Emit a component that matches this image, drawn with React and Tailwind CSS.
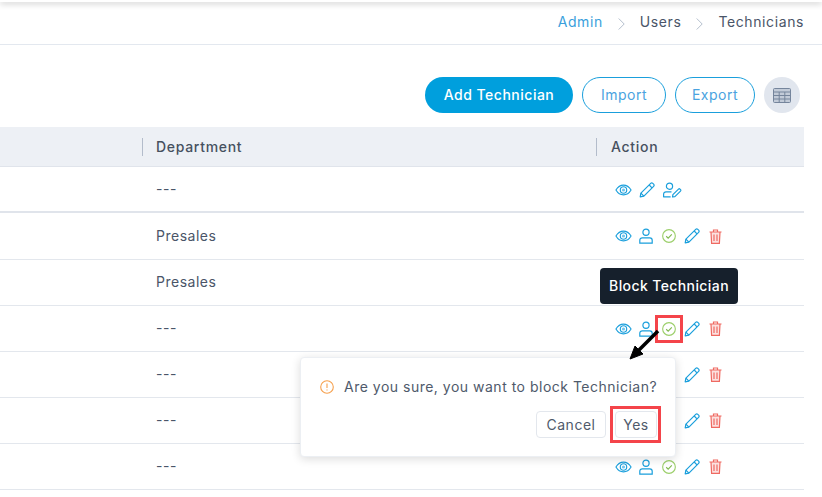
import React from "react";

const font = { fontFamily: "Inter, 'Open Sans', sans-serif" };

const Eye = () => (
  <svg width="17" height="14" viewBox="0 0 18 14" fill="none" stroke="#1a9fdc" strokeWidth="1.2">
    <path d="M1 7c2-3.4 4.8-5.2 8-5.2S15 3.600 17 7c-2 3.400-4.800 5.200-8 5.200S3 10.400 1 7z" />
    <circle cx="9" cy="7" r="3.400" />
    <circle cx="9" cy="7" r="1.700" fill="#1a9fdc" fillOpacity="0.6" stroke="none" />
  </svg>
);

const Pencil = () => (
  <svg width="16" height="16" viewBox="0 0 16 16" fill="none" stroke="#1a9fdc" strokeWidth="1.2" strokeLinejoin="round">
    <path d="M1.200 14.800l.7-3.700L11.700 1.400a1.500 1.500 0 0 1 2.100 0l.8.8a1.500 1.500 0 0 1 0 2.100L4.900 14.100z" />
    <path d="M10.200 3l2.800 2.800M1.900 11.100l3 3" />
  </svg>
);

const User = () => (
  <svg width="14" height="16" viewBox="0 0 14 16" fill="none" stroke="#1a9fdc" strokeWidth="1.2">
    <circle cx="7" cy="4.200" r="3.100" />
    <path d="M3.200 9.800h7.600a2.400 2.400 0 0 1 2.400 2.400v2.900H.8v-2.900a2.400 2.400 0 0 1 2.400-2.400z" />
  </svg>
);

const UserEdit = () => (
  <svg width="19" height="16" viewBox="0 0 19 16" fill="none" stroke="#1a9fdc" strokeWidth="1.2" strokeLinejoin="round">
    <circle cx="6.500" cy="4.200" r="3.100" />
    <path d="M8.500 9.800H3A2.400 2.400 0 0 0 .6 12.200v2.600h7" />
    <path d="M9.500 15l.4-2.300 5.600-5.600a1.100 1.100 0 0 1 1.500 0l.5.500a1.100 1.100 0 0 1 0 1.500l-5.600 5.600z" />
  </svg>
);

const Check = () => (
  <svg width="14" height="14" viewBox="0 0 15 15" fill="none" stroke="#9ccf6b" strokeWidth="1.2">
    <circle cx="7.500" cy="7.500" r="6.800" />
    <path d="M4.500 7.800l2.100 2 3.900-4" stroke="#7fb84f" />
  </svg>
);

const Trash = () => (
  <svg width="13" height="15" viewBox="0 0 13 15" fill="none" stroke="#ef6a62" strokeWidth="1.2">
    <path d="M.5 3h12M4.500 3V1h4v2" />
    <path d="M2 3l.6 11.400h7.800L11 3" fill="#ef6a62" fillOpacity="0.2" />
    <path d="M5 5.500v6.500M8 5.500v6.500" />
  </svg>
);

const TableIcon = () => (
  <svg width="18" height="15" viewBox="0 0 18 15" fill="#8c9bb1" stroke="#75859c" strokeWidth="1">
    <rect x="0.500" y="0.500" width="17" height="14" rx="1" fill="#c2cbd8" />
    <path d="M.5 4h17M.5 7.500h17M.5 11h17M6.200 4v10.500M11.800 4v10.500" fill="none" />
  </svg>
);

const Chevron = () => (
  <svg className="mt-[5px]" width="7" height="12" viewBox="0 0 7 12" fill="none" stroke="#b4bfcd" strokeWidth="1">
    <path d="M.7 .5l5.500 5.500-5.500 5.500" />
  </svg>
);

const Warn = () => (
  <svg width="14" height="14" viewBox="0 0 14 14" fill="none" stroke="#f6a04d" strokeWidth="1.100">
    <circle cx="7" cy="7" r="6.300" />
    <path d="M7 3.500v4.400M7 9.500v1.100" />
  </svg>
);

const FullActions = () => (
  <div className="flex items-center gap-[7px] ml-[1px]">
    <Eye />
    <User />
    <div className="ml-[2px]"><Check /></div>
    <div className="ml-[1px]"><Pencil /></div>
    <div className="ml-[2px]"><Trash /></div>
  </div>
);

const rows = [
  { dept: "Presales", h: "h-[47px]" },
  { dept: "Presales", h: "h-[46px]" },
  { dept: "---", h: "h-[46px]" },
  { dept: "---", h: "h-[46px]" },
  { dept: "---", h: "h-[46px]" },
  { dept: "---", h: "h-[46px]" },
];

export default function App() {
  return (
    <div style={font} className="relative w-[822px] h-[497px] overflow-hidden bg-white text-[#4a5568] tracking-[0.5px]">
      {/* top bar shadow */}
      <div className="h-[2px] bg-white shadow-[0_1px_6px_rgba(0,0,0,0.4)]" />

      {/* Breadcrumb */}
      <div className="h-[43px] border-b border-[#e3e8ef] flex items-center justify-end pr-[18px] pb-[3px] text-[14px] tracking-[0.6px] gap-[15px]">
        <span className="text-[#3a9fdc]">Admin</span>
        <Chevron />
        <span>Users</span>
        <Chevron />
        <span>Technicians</span>
      </div>

      {/* Toolbar */}
      <div className="h-[82px] flex items-start justify-end pr-[22px] pt-[32px] gap-[9px] text-[14px]">
        <button className="w-[148px] h-[36px] pb-[2px] rounded-full bg-[#009fdd] text-white font-medium">Add Technician</button>
        <button className="w-[84px] h-[36px] pb-[2px] rounded-full border border-[#1a9fdc] text-[#4aa3e0]">Import</button>
        <button className="w-[80px] h-[36px] pb-[2px] rounded-full border border-[#1a9fdc] text-[#4aa3e0]">Export</button>
        <div className="w-[36px] h-[36px] rounded-full bg-[#e1e6ee] flex items-center justify-center"><TableIcon /></div>
      </div>

      {/* Table */}
      <div className="w-[804px] text-[14px]">
        <div className="h-[40px] bg-[#edf0f5] border-b border-[#e0e4eb] grid grid-cols-[142px_454px_1fr] items-center font-medium text-[#46505f] tracking-[0.7px]">
          <div />
          <div className="border-l border-[#b3bccb] pl-[13px] leading-[17px] pb-[1px]">Department</div>
          <div className="border-l border-[#b3bccb] pl-[14px] leading-[17px] pb-[1px]">Action</div>
        </div>

        <div className="h-[46px] border-b-2 border-[#e0e4eb] grid grid-cols-[156px_459px_1fr] items-center">
          <div />
          <div className="pb-[2px]">---</div>
          <div className="flex items-center gap-[7px] pt-[2px]">
            <Eye />
            <Pencil />
            <div className="ml-[1px]"><UserEdit /></div>
          </div>
        </div>

        {rows.map((row, i) => (
          <div key={i} className={`${row.h} border-b border-[#e3e7ed] grid grid-cols-[156px_458px_1fr] items-center`}>
            <div />
            <div className="pb-[2px]">{row.dept}</div>
            <FullActions />
          </div>
        ))}
      </div>

      {/* Tooltip */}
      <div className="absolute left-[600px] top-[268px] w-[138px] h-[36px] pb-[2px] rounded-[4px] bg-[#16202c] text-white text-[14px] tracking-[0.4px] font-medium flex items-center justify-center">
        Block Technician
      </div>

      {/* Popconfirm */}
      <div className="absolute left-[300px] top-[357px] w-[376px] h-[100px] rounded-[4px] bg-white border border-[#eceff3] shadow-[0_2px_10px_rgba(0,0,0,0.14)]">
        <div className="flex items-center gap-[10px] pl-[19px] pt-[18px] text-[14px] text-[#4f5a6b]">
          <Warn />
          <span>Are you sure, you want to block Technician?</span>
        </div>
        <div className="flex justify-end gap-[9px] mt-[14px] pr-[18px] text-[14px] text-[#4f5a6b]">
          <button className="w-[70px] h-[27px] rounded-[4px] border border-[#e3e7ed]">Cancel</button>
          <button className="w-[42px] h-[27px] rounded-[4px] border border-[#e3e7ed]">Yes</button>
        </div>
      </div>

      {/* Annotations */}
      <div className="absolute left-[655px] top-[315px] w-[28px] h-[28px] border-[3px] border-[#f4444a]" />
      <div className="absolute left-[610px] top-[406px] w-[51px] h-[37px] border-[3px] border-[#f4444a]" />
      <svg className="absolute left-[625px] top-[325px]" width="40" height="40" viewBox="0 0 40 40" fill="#000" stroke="#000">
        <path d="M33 6L11 28" strokeWidth="3.500" />
        <path d="M5 34l5-13 8 8z" />
      </svg>
    </div>
  );
}
